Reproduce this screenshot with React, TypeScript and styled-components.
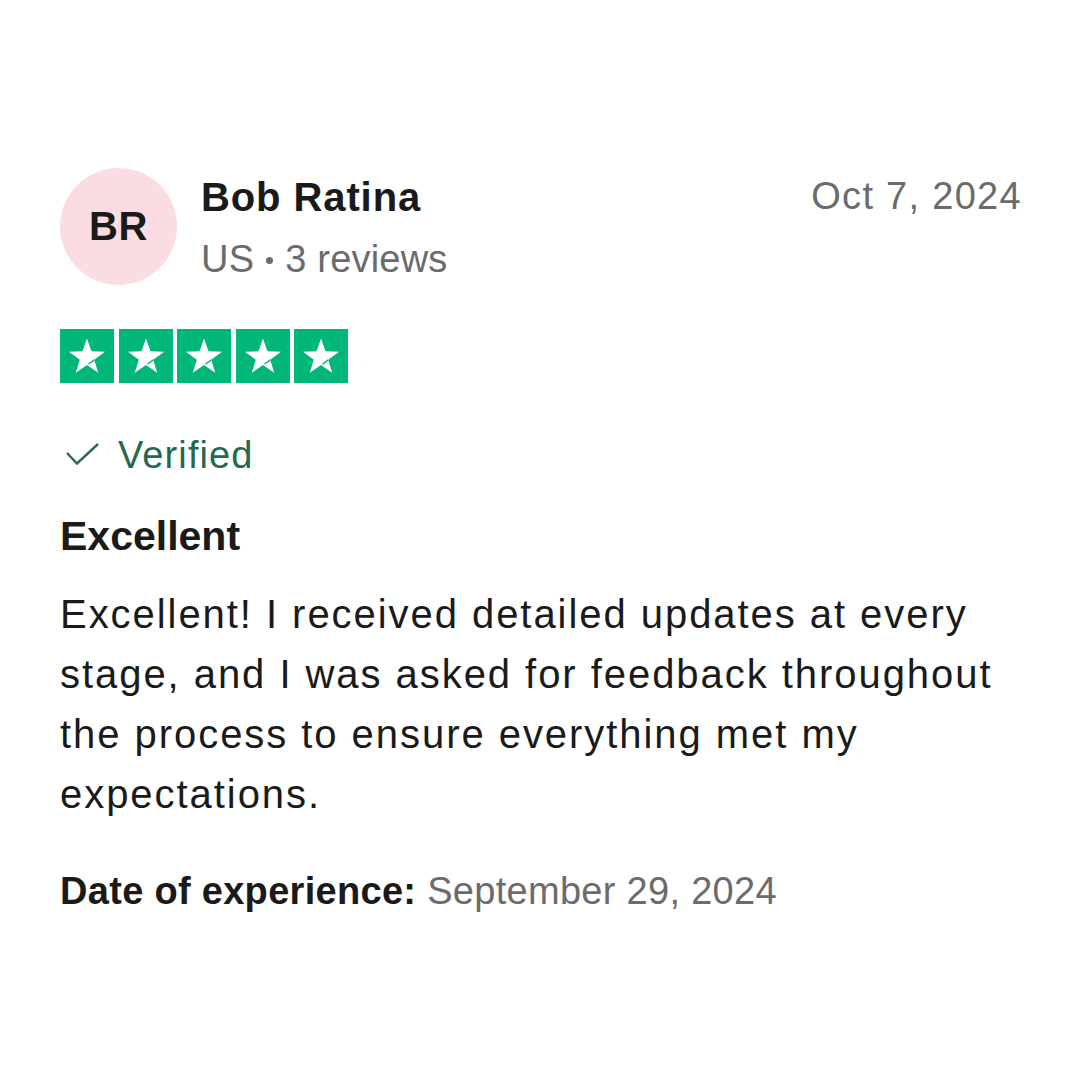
import React from "react";
import styled, { createGlobalStyle } from "styled-components";

const GlobalStyle = createGlobalStyle`
    html, body {
        margin: 0;
        padding: 0;
        background: #fff;
    }
    body {
        font-family: "Liberation Sans", Arial, sans-serif;
        color: #1a1a1a;
    }
`;

const Pagina = styled.div`
    width: 1080px;
    height: 1080px;
    box-sizing: border-box;
    padding: 168px 58px 0 60px;
    background: #fff;
`;

const Cabecalho = styled.div`
    display: flex;
    align-items: flex-start;
    justify-content: space-between;
`;

const Autor = styled.div`
    display: flex;
    align-items: flex-start;
    gap: 24px;
`;

const Avatar = styled.div`
    width: 117px;
    height: 117px;
    border-radius: 50%;
    background: #fcdce3;
    display: flex;
    align-items: center;
    justify-content: center;
    font-weight: 700;
    font-size: 40px;
    letter-spacing: 0.5px;
    color: #1a1a1a;
`;

const InfoAutor = styled.div`
    display: flex;
    flex-direction: column;
    padding-top: 5px;
`;

const Nome = styled.div`
    font-weight: 700;
    font-size: 40px;
    line-height: 48px;
    letter-spacing: 0.9px;
    color: #1a1a1a;
`;

const Detalhes = styled.div`
    font-size: 38px;
    line-height: 48px;
    margin-top: 14px;
    color: #6b6b6b;
    letter-spacing: 0.2px;
`;

const Ponto = styled.span`
    display: inline-block;
    width: 7px;
    height: 7px;
    border-radius: 50%;
    background: #6b6b6b;
    margin: 0 12px 0 12px;
    vertical-align: 8px;
`;

const Data = styled.div`
    font-size: 38px;
    line-height: 48px;
    padding-top: 4px;
    color: #6b6b6b;
    letter-spacing: 1.3px;
`;

const Estrelas = styled.div`
    display: flex;
    gap: 4.5px;
    margin-top: 44px;
`;

const Quadrado = styled.div`
    width: 54px;
    height: 54px;
    background: #00b67a;
    display: flex;
    align-items: center;
    justify-content: center;
`;

const Verificado = styled.div`
    display: flex;
    align-items: center;
    gap: 18px;
    margin-top: 48px;
    padding-left: 6px;
    font-size: 38px;
    line-height: 48px;
    color: #1f6b4b;
    letter-spacing: 1.1px;
`;

const Titulo = styled.h2`
    margin: 27px 0 0;
    font-size: 41px;
    line-height: 60px;
    font-weight: 700;
    color: #1a1a1a;
`;

const Texto = styled.p`
    margin: 18px 0 0;
    font-size: 40px;
    line-height: 60px;
    color: #1a1a1a;
    letter-spacing: 1.95px;
`;

const Experiencia = styled.div`
    margin-top: 43px;
    font-size: 38px;
    line-height: 48px;
    color: #6b6b6b;
    letter-spacing: 0.3px;

    strong {
        color: #1a1a1a;
        font-weight: 700;
    }
`;

const Estrela = () => (
    <svg width="54" height="54" viewBox="0 0 54 54">
        <polygon
            fill="#fff"
            points="27,9.5 31.47,22.35 45.07,22.63 34.23,30.85 38.17,43.87 27,36.1 15.83,43.87 19.77,30.85 8.93,22.63 22.53,22.35"
        />
        <line x1="34.23" y1="30.85" x2="28.5" y2="35.2" stroke="#00b67a" strokeWidth="1.4" />
    </svg>
);

const Check = () => (
    <svg width="34" height="24" viewBox="0 0 34 24">
        <polyline points="1,10 11,20.5 32,1" fill="none" stroke="#2a6a4d" strokeWidth="2.4" />
    </svg>
);

export default function App() {
    return (
        <>
            <GlobalStyle />
            <Pagina>
                <Cabecalho>
                    <Autor>
                        <Avatar>BR</Avatar>
                        <InfoAutor>
                            <Nome>Bob Ratina</Nome>
                            <Detalhes>
                                US<Ponto />3 reviews
                            </Detalhes>
                        </InfoAutor>
                    </Autor>
                    <Data>Oct 7, 2024</Data>
                </Cabecalho>
                <Estrelas>
                    {[0, 1, 2, 3, 4].map((i) => (
                        <Quadrado key={i}>
                            <Estrela />
                        </Quadrado>
                    ))}
                </Estrelas>
                <Verificado>
                    <Check />
                    Verified
                </Verificado>
                <Titulo>Excellent</Titulo>
                <Texto>
                    Excellent! I received detailed updates at every stage, and I was asked for feedback
                    throughout the process to ensure everything met my expectations.
                </Texto>
                <Experiencia>
                    <strong>Date of experience:</strong> September 29, 2024
                </Experiencia>
            </Pagina>
        </>
    );
}
